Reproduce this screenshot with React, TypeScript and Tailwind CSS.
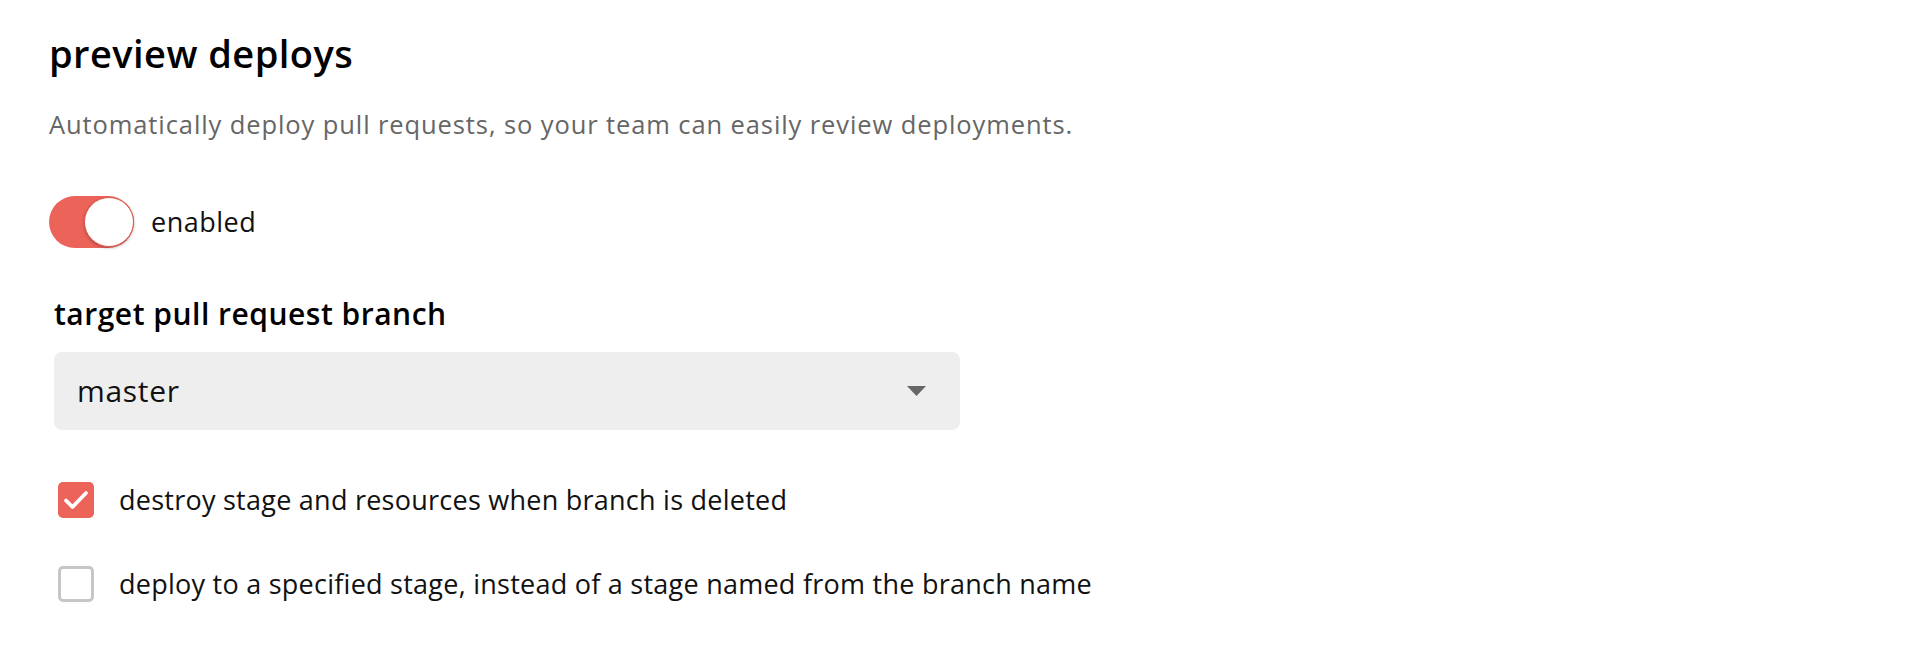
import React, { useState } from 'react';

const RED = 'bg-[#ec635a]';

const Toggle: React.FC<{ on: boolean; onChange: (v: boolean) => void }> = ({ on, onChange }) => (
    <button
        type="button"
        onClick={() => onChange(!on)}
        className={`relative w-[85px] h-[52px] rounded-full shrink-0 transition-colors ${on ? RED : 'bg-[#cccccc]'}`}
    >
        <span
            className={`absolute top-[1px] w-[50px] h-[50px] rounded-full bg-white border-[1.5px] border-[#e0574e] shadow-[0_1px_3px_rgba(0,0,0,0.3)] transition-all ${on ? 'right-0' : 'left-0'}`}
        />
    </button>
);

const Checkbox: React.FC<{ checked: boolean; onChange: (v: boolean) => void; label: string }> = ({ checked, onChange, label }) => (
    <label className="flex items-center gap-[25px] ml-[9px] cursor-pointer select-none">
        <span
            onClick={() => onChange(!checked)}
            className={`w-[36px] h-[36px] rounded-[5px] shrink-0 flex items-center justify-center ${checked ? RED : 'bg-white border-[3px] border-[#c6c6c6]'}`}
        >
            {checked && (
                <svg viewBox="0 0 36 36" className="w-[36px] h-[36px]">
                    <path d="M8 18.5 L14.5 25 L28 11" fill="none" stroke="white" strokeWidth="3.8" strokeLinecap="round" strokeLinejoin="round" />
                </svg>
            )}
        </span>
        <span className="text-[27px] leading-[1.2] tracking-[0.25px] text-[#111111]">{label}</span>
    </label>
);

export default function App() {
    const [enabled, setEnabled] = useState(true);
    const [destroy, setDestroy] = useState(true);
    const [specified, setSpecified] = useState(false);

    return (
        <div className="min-h-[650px] bg-white pl-[49px] pt-[31px] font-['Open_Sans','Noto_Sans',sans-serif] text-[#111111]">
            <h1 className="text-[38px] leading-[1.2] tracking-[0.45px] font-semibold text-black">preview deploys</h1>
            <p className="mt-[32px] text-[25.5px] leading-[1.2] tracking-[0.9px] text-[#666666]">
                Automatically deploy pull requests, so your team can easily review deployments.
            </p>

            <div className="mt-[57px] flex items-center gap-[17px]">
                <Toggle on={enabled} onChange={setEnabled} />
                <span className="text-[27px] leading-[1.2] tracking-[0.5px]">enabled</span>
            </div>

            <div className="mt-[48px] ml-[5px]">
                <label className="block text-[30px] leading-[1.2] tracking-[0.5px] font-semibold text-black">target pull request branch</label>
                <div className="mt-[20px] w-[906px] h-[78px] rounded-[8px] bg-[#eeeeee] flex items-center justify-between pl-[23px] pr-[34px]">
                    <span className="text-[30px] leading-[1.2] tracking-[0.7px]">master</span>
                    <svg viewBox="0 0 19 10" className="w-[19px] h-[10px]">
                        <path d="M0 0 H19 L9.5 10 Z" fill="#666666" />
                    </svg>
                </div>
            </div>

            <div className="mt-[52px] flex flex-col gap-[48px]">
                <Checkbox checked={destroy} onChange={setDestroy} label="destroy stage and resources when branch is deleted" />
                <Checkbox checked={specified} onChange={setSpecified} label="deploy to a specified stage, instead of a stage named from the branch name" />
            </div>
        </div>
    );
}
